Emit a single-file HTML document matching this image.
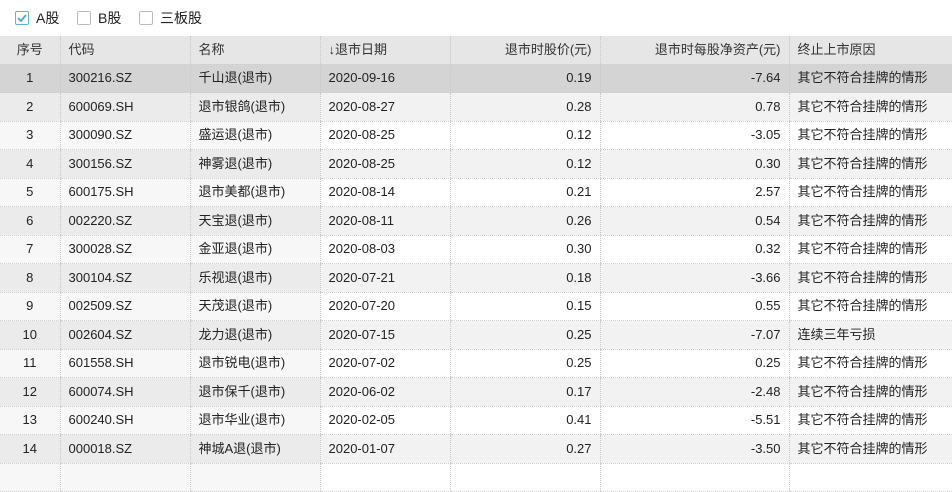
<!DOCTYPE html>
<html><head><meta charset="utf-8"><style>
*{margin:0;padding:0;box-sizing:border-box}
body{width:952px;height:466px;overflow:hidden;background:#fff;font-family:"Liberation Sans","Noto Sans CJK SC",sans-serif;font-size:13px;color:#222}
.top{height:36px;position:relative}
.cb{position:absolute;top:11px;width:14px;height:14px;border:1px solid #bbb;border-radius:2px;background:#fff}
.lbl{position:absolute;top:9px;font-size:14px;line-height:18px;color:#222}
table{border-collapse:collapse;table-layout:fixed;width:952px}
td,th{height:28.5px;line-height:16px;padding:0 8px;white-space:nowrap;font-weight:normal;border-left:1px dotted #c8c8c8;border-bottom:1px dotted #d0d0d0;vertical-align:middle}
td:first-child,th:first-child{border-left:none}
th{background:#e6e6e6;color:#333;height:28px;text-align:left}
.c{text-align:center}.r{text-align:right}
tr td{background:#fff}
tr td.g{background:#f7f7f7}
tr:nth-child(odd) td{background:#f2f2f2}
tr:nth-child(odd) td.g{background:#ebebeb}
tr.sel td,tr.sel td.g{background:#d4d4d4}
</style></head><body>
<div class="top">
<div class="cb" style="left:15px;border-color:#5bb5d5"><svg width="12" height="12" style="position:absolute;left:0;top:0"><path d="M2 6L5 9L10 3" stroke="#4aa8d0" stroke-width="1.8" fill="none"/></svg></div>
<div class="lbl" style="left:36px">A股</div>
<div class="cb" style="left:77px"></div>
<div class="lbl" style="left:98px">B股</div>
<div class="cb" style="left:139px"></div>
<div class="lbl" style="left:160px">三板股</div>
</div>
<table>
<colgroup><col style="width:60px"><col style="width:130px"><col style="width:130px"><col style="width:130px"><col style="width:150px"><col style="width:189px"><col style="width:163px"></colgroup>
<tr><th class="c">序号</th><th>代码</th><th>名称</th><th>↓退市日期</th><th class="r">退市时股价(元)</th><th class="r">退市时每股净资产(元)</th><th>终止上市原因</th></tr>
<tr class="sel"><td class="g c">1</td><td class="g">300216.SZ</td><td class="g">千山退(退市)</td><td>2020-09-16</td><td class="r">0.19</td><td class="r">-7.64</td><td>其它不符合挂牌的情形</td></tr>
<tr><td class="g c">2</td><td class="g">600069.SH</td><td class="g">退市银鸽(退市)</td><td>2020-08-27</td><td class="r">0.28</td><td class="r">0.78</td><td>其它不符合挂牌的情形</td></tr>
<tr><td class="g c">3</td><td class="g">300090.SZ</td><td class="g">盛运退(退市)</td><td>2020-08-25</td><td class="r">0.12</td><td class="r">-3.05</td><td>其它不符合挂牌的情形</td></tr>
<tr><td class="g c">4</td><td class="g">300156.SZ</td><td class="g">神雾退(退市)</td><td>2020-08-25</td><td class="r">0.12</td><td class="r">0.30</td><td>其它不符合挂牌的情形</td></tr>
<tr><td class="g c">5</td><td class="g">600175.SH</td><td class="g">退市美都(退市)</td><td>2020-08-14</td><td class="r">0.21</td><td class="r">2.57</td><td>其它不符合挂牌的情形</td></tr>
<tr><td class="g c">6</td><td class="g">002220.SZ</td><td class="g">天宝退(退市)</td><td>2020-08-11</td><td class="r">0.26</td><td class="r">0.54</td><td>其它不符合挂牌的情形</td></tr>
<tr><td class="g c">7</td><td class="g">300028.SZ</td><td class="g">金亚退(退市)</td><td>2020-08-03</td><td class="r">0.30</td><td class="r">0.32</td><td>其它不符合挂牌的情形</td></tr>
<tr><td class="g c">8</td><td class="g">300104.SZ</td><td class="g">乐视退(退市)</td><td>2020-07-21</td><td class="r">0.18</td><td class="r">-3.66</td><td>其它不符合挂牌的情形</td></tr>
<tr><td class="g c">9</td><td class="g">002509.SZ</td><td class="g">天茂退(退市)</td><td>2020-07-20</td><td class="r">0.15</td><td class="r">0.55</td><td>其它不符合挂牌的情形</td></tr>
<tr><td class="g c">10</td><td class="g">002604.SZ</td><td class="g">龙力退(退市)</td><td>2020-07-15</td><td class="r">0.25</td><td class="r">-7.07</td><td>连续三年亏损</td></tr>
<tr><td class="g c">11</td><td class="g">601558.SH</td><td class="g">退市锐电(退市)</td><td>2020-07-02</td><td class="r">0.25</td><td class="r">0.25</td><td>其它不符合挂牌的情形</td></tr>
<tr><td class="g c">12</td><td class="g">600074.SH</td><td class="g">退市保千(退市)</td><td>2020-06-02</td><td class="r">0.17</td><td class="r">-2.48</td><td>其它不符合挂牌的情形</td></tr>
<tr><td class="g c">13</td><td class="g">600240.SH</td><td class="g">退市华业(退市)</td><td>2020-02-05</td><td class="r">0.41</td><td class="r">-5.51</td><td>其它不符合挂牌的情形</td></tr>
<tr><td class="g c">14</td><td class="g">000018.SZ</td><td class="g">神城A退(退市)</td><td>2020-01-07</td><td class="r">0.27</td><td class="r">-3.50</td><td>其它不符合挂牌的情形</td></tr>
<tr><td class="g c"></td><td class="g"></td><td class="g"></td><td></td><td></td><td></td><td></td></tr>
</table>
</body></html>
